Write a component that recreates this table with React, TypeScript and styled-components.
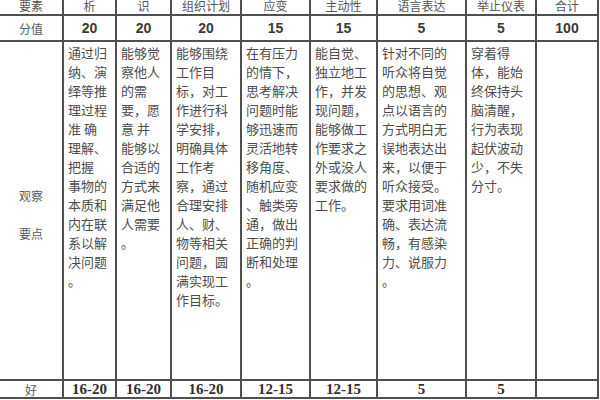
import React from 'react'
import styled, { createGlobalStyle, css } from 'styled-components'

const GlobalStyle = createGlobalStyle`
  html, body {
    margin: 0;
    padding: 0;
    background: #ffffff;
    overflow: hidden;
  }
`

const Page = styled.div`
  width: 600px;
  height: 400px;
  overflow: hidden;
  background: #ffffff;
`

const Sheet = styled.div`
  display: grid;
  grid-template-columns: 62px 51px 53px 68px 67px 65px 87px 68px 60px;
  grid-template-rows: 31px 24px 337px 16px;
  gap: 2px;
  padding: 2px;
  width: max-content;
  margin: -19px 0 0 -2px;
  background: #505050;
`

type Kind = 'head' | 'label' | 'score' | 'body' | 'good'

const Cell = styled.div<{ $kind: Kind }>`
  background: #ffffff;
  color: #4d4d4d;
  overflow: hidden;
  font-family: 'Noto Sans CJK SC', 'Noto Sans', sans-serif;

  ${({ $kind }) =>
    $kind === 'head' &&
    css`
      display: flex;
      align-items: flex-end;
      justify-content: center;
      font-size: 12px;
      line-height: 15px;
      padding-bottom: 1px;
      color: #555555;
    `}

  ${({ $kind }) =>
    $kind === 'label' &&
    css`
      display: flex;
      align-items: center;
      justify-content: center;
      text-align: center;
      font-size: 12px;
      line-height: 19px;
      color: #5a5a5a;
    `}

  ${({ $kind }) =>
    $kind === 'score' &&
    css`
      display: flex;
      align-items: center;
      justify-content: center;
      font-family: 'Liberation Sans', Arial, sans-serif;
      font-weight: bold;
      font-size: 14px;
      color: #3a3a3a;
    `}

  ${({ $kind }) =>
    $kind === 'body' &&
    css`
      padding: 1px 0 0 4px;
      font-size: 13px;
      line-height: 19px;
    `}

  ${({ $kind }) =>
    $kind === 'good' &&
    css`
      display: flex;
      align-items: center;
      justify-content: center;
      font-family: 'Liberation Serif', 'Times New Roman', serif;
      font-weight: bold;
      font-size: 15px;
      line-height: 16px;
      color: #2e2e2e;
    `}
`

const Line = styled.div`
  white-space: pre;
`

const LabelStack = styled.div`
  padding-top: 8px;
`

const heads = ['要素', '析', '识', '组织计划', '应变', '主动性', '语言表达', '举止仪表', '合计']
const scores = ['20', '20', '20', '15', '15', '5', '5', '100']
const goods = ['16-20', '16-20', '16-20', '12-15', '12-15', '5', '5', '']

const points: string[][] = [
  ['通过归', '纳、演', '绎等推', '理过程', '准 确', '理解、', '把握', '事物的', '本质和', '内在联', '系以解', '决问题', '。'],
  ['能够觉', '察他人', '的需', '要，愿', '意 并', '能够以', '合适的', '方式来', '满足他', '人需要', '。'],
  [
    '能够围绕', '工作目', '标，对工', '作进行科', '学安排，', '明确具体', '工作考', '察，通过',
    '合理安排', '人、财、', '物等相关', '问题，圆', '满实现工', '作目标。',
  ],
  [
    '在有压力', '的情下，', '思考解决', '问题时能', '够迅速而', '灵活地转', '移角度、', '随机应变',
    '、触类旁', '通，做出', '正确的判', '断和处理', '。',
  ],
  ['能自觉、', '独立地工', '作，并发', '现问题，', '能够做工', '作要求之', '外或没人', '要求做的', '工作。'],
  [
    '针对不同的', '听众将自觉', '的思想、观', '点以语言的', '方式明白无', '误地表达出', '来，以便于',
    '听众接受。', '要求用词准', '确、表达流', '畅，有感染', '力、说服力', '。',
  ],
  ['穿着得', '体，能始', '终保持头', '脑清醒，', '行为表现', '起伏波动', '少，不失', '分寸。'],
  [],
]

export default function App() {
  return (
    <Page>
      <GlobalStyle />
      <Sheet>
        {heads.map((h, i) => (
          <Cell key={`h${i}`} $kind="head">
            {h}
          </Cell>
        ))}

        <Cell $kind="label">分值</Cell>
        {scores.map((s, i) => (
          <Cell key={`s${i}`} $kind="score">
            {s}
          </Cell>
        ))}

        <Cell $kind="label">
          <LabelStack>
            <Line>观察</Line>
            <Line> </Line>
            <Line>要点</Line>
          </LabelStack>
        </Cell>
        {points.map((lines, i) => (
          <Cell key={`b${i}`} $kind="body">
            {lines.map((l, j) => (
              <Line key={j}>{l}</Line>
            ))}
          </Cell>
        ))}

        <Cell $kind="label">好</Cell>
        {goods.map((g, i) => (
          <Cell key={`g${i}`} $kind="good">
            {g}
          </Cell>
        ))}
      </Sheet>
    </Page>
  )
}
